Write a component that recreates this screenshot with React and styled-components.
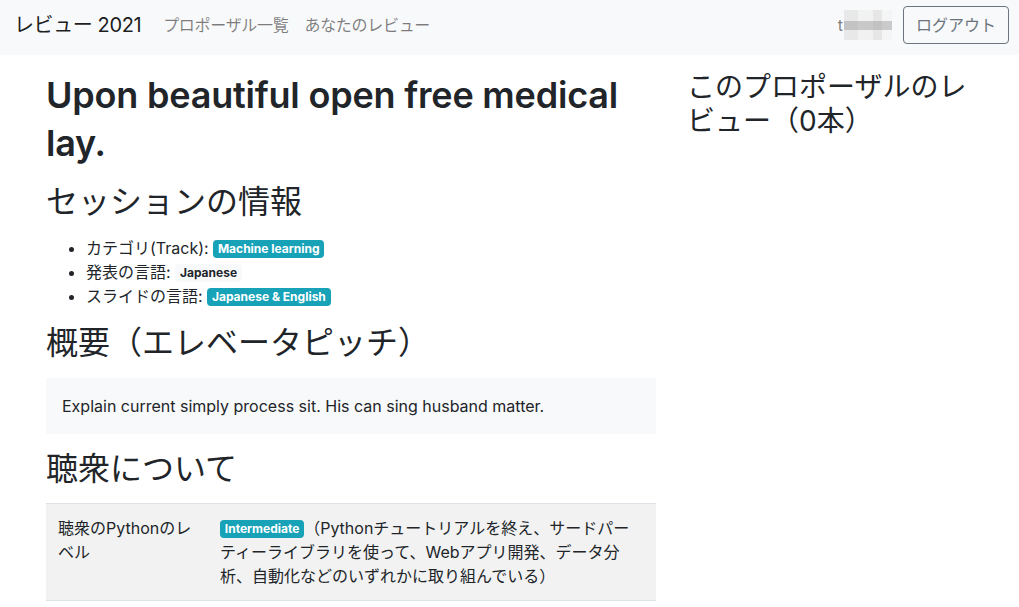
import React from "react";
import styled, { createGlobalStyle } from "styled-components";

const GlobalStyle = createGlobalStyle`
  * {
    box-sizing: border-box;
  }
  body {
    margin: 0;
    background: #fff;
    color: #212529;
    font-family: Inter, "Noto Sans CJK JP", sans-serif;
    font-size: 16px;
    line-height: 1.5;
  }
`;

const Navbar = styled.nav`
  display: flex;
  align-items: center;
  background-color: #f8f9fa;
  padding: 5px 10px 10px 14px;
`;

const Brand = styled.a`
  font-size: 20px;
  line-height: 30px;
  color: rgba(0, 0, 0, 0.9);
  margin-right: 14px;
  letter-spacing: -0.4px;
  white-space: nowrap;
`;

const NavLinks = styled.div`
  display: flex;
  flex: 1;
`;

const NavLink = styled.a`
  padding: 8px;
  color: rgba(0, 0, 0, 0.5);
  letter-spacing: -0.3px;
  white-space: nowrap;
`;

const UserName = styled.span`
  display: flex;
  align-items: center;
  color: rgba(0, 0, 0, 0.5);
  margin-right: 11px;
`;

const Mosaic = styled.span`
  display: inline-block;
  width: 48px;
  height: 30px;
  margin-left: 1px;
  background:
    linear-gradient(to bottom, transparent 38%, rgba(150, 150, 150, 0.45) 38%, rgba(150, 150, 150, 0.45) 68%, transparent 68%),
    linear-gradient(to right, rgba(225, 225, 225, 0.7) 0 30%, rgba(238, 238, 238, 0.7) 30% 60%, rgba(222, 222, 222, 0.7) 60% 80%, rgba(242, 242, 242, 0.6) 80%);
`;

const OutlineButton = styled.button`
  font-family: inherit;
  font-size: 16px;
  line-height: 24px;
  padding: 6px 12px;
  color: #6c757d;
  background: transparent;
  border: 1px solid #6c757d;
  border-radius: 4px;
`;

const Main = styled.div`
  display: grid;
  grid-template-columns: 610px 290px;
  column-gap: 31px;
  padding: 16px 0 0 46px;
`;

const Column = styled.div`
  min-width: 0;
`;

const Title = styled.h1`
  font-size: 36px;
  line-height: 48px;
  font-weight: 600;
  margin: 0 0 16px;
  letter-spacing: -0.2px;
`;

const SectionTitle = styled.h2`
  font-size: 32px;
  line-height: 38.4px;
  font-weight: 400;
  margin: 0 0 15px;
`;

const SideTitle = styled.h3`
  font-size: 28px;
  line-height: 33.6px;
  font-weight: 400;
  margin: 0 0 16px;
`;

const InfoList = styled.ul`
  margin: 0 0 16px;
  padding-left: 40px;
`;

const Badge = styled.span`
  display: inline-block;
  padding: 3px 4.8px;
  font-size: 12px;
  font-weight: 700;
  line-height: 1;
  border-radius: 4px;
  vertical-align: 1px;
  white-space: nowrap;
  color: ${(p) => (p.$light ? "#212529" : "#fff")};
  background-color: ${(p) => (p.$light ? "#f8f9fa" : "#17a2b8")};
`;

const PitchBox = styled.div`
  background-color: #f8f9fa;
  padding: 16px;
  margin-bottom: 16px;
`;

const Table = styled.table`
  width: 100%;
  border-collapse: collapse;
  border-bottom: 1px solid #dee2e6;
`;

const Row = styled.tr`
  background-color: ${(p) => (p.$striped ? "rgba(0, 0, 0, 0.05)" : "transparent")};
`;

const Cell = styled.td`
  padding: 12px;
  border-top: 1px solid #dee2e6;
  vertical-align: top;
  width: ${(p) => p.$width || "auto"};
`;

export default function App() {
  return (
    <>
      <GlobalStyle />
      <Navbar>
        <Brand>レビュー 2021</Brand>
        <NavLinks>
          <NavLink>プロポーザル一覧</NavLink>
          <NavLink>あなたのレビュー</NavLink>
        </NavLinks>
        <UserName>
          t<Mosaic />
        </UserName>
        <OutlineButton>ログアウト</OutlineButton>
      </Navbar>
      <Main>
        <Column>
          <Title>Upon beautiful open free medical lay.</Title>
          <SectionTitle>セッションの情報</SectionTitle>
          <InfoList>
            <li>
              カテゴリ(Track): <Badge>Machine learning</Badge>
            </li>
            <li>
              発表の言語: <Badge $light>Japanese</Badge>
            </li>
            <li>
              スライドの言語: <Badge>Japanese &amp; English</Badge>
            </li>
          </InfoList>
          <SectionTitle>概要（エレベータピッチ）</SectionTitle>
          <PitchBox>Explain current simply process sit. His can sing husband matter.</PitchBox>
          <SectionTitle>聴衆について</SectionTitle>
          <Table>
            <tbody>
              <Row $striped>
                <Cell $width="162px">聴衆のPythonのレベル</Cell>
                <Cell>
                  <Badge>Intermediate</Badge>
                  （Pythonチュートリアルを終え、サードパーティーライブラリを使って、Webアプリ開発、データ分析、自動化などのいずれかに取り組んでいる）
                </Cell>
              </Row>
            </tbody>
          </Table>
        </Column>
        <Column>
          <SideTitle>このプロポーザルのレビュー（0本）</SideTitle>
        </Column>
      </Main>
    </>
  );
}
